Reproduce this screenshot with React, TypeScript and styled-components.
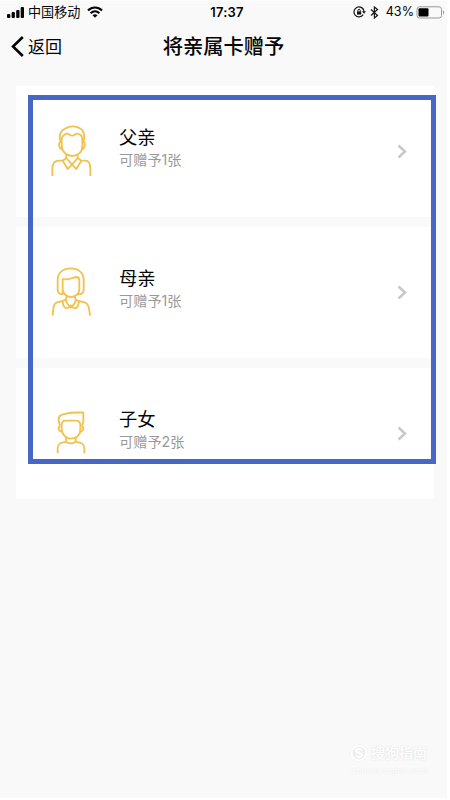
import React from "react";
import styled, { createGlobalStyle } from "styled-components";

const GlobalStyle = createGlobalStyle`
  * { box-sizing: border-box; }
  body {
    margin: 0;
    background: #fff;
    font-family: "Liberation Sans", "Noto Sans CJK SC", sans-serif;
  }
`;

const Screen = styled.div`
  position: relative;
  width: 447px;
  height: 798px;
  background: #f9f9f9;
  color: #050505;
  border-top: 1px solid #fefefe;
  overflow: hidden;
`;

const StatusBar = styled.div`
  display: grid;
  grid-template-columns: 1fr auto 1fr;
  align-items: center;
  height: 21px;
  padding: 0 2px 0 7px;
`;

const StatusGroup = styled.div<{ $end?: boolean }>`
  display: flex;
  align-items: center;
  justify-content: ${(p) => (p.$end ? "flex-end" : "flex-start")};
`;

const Carrier = styled.span`
  margin: 2px 7px 0 4px;
  font-size: 13.1px;
  line-height: 20px;
`;

const Clock = styled.span`
  margin-left: 2px;
  font-family: Inter, sans-serif;
  font-size: 13px;
  font-weight: 600;
  letter-spacing: 0.25px;
  line-height: 20px;
`;

const Bluetooth = styled.svg`
  margin-left: 4px;
`;

const Percent = styled.span`
  margin: 0 2px 0 7px;
  font-family: Inter, sans-serif;
  font-size: 12.6px;
  line-height: 20px;
`;

const NavBar = styled.header`
  display: grid;
  grid-template-columns: 1fr auto 1fr;
  align-items: center;
  height: 64px;
  padding: 0 11px 14px;
`;

const BackButton = styled.div`
  display: flex;
  align-items: center;
  gap: 4px;
  font-size: 17px;
  line-height: 24px;
`;

const BackLabel = styled.span`
  padding-top: 2px;
`;

const Title = styled.h1`
  margin: 0 0 1px;
  font-size: 20.3px;
  font-weight: 500;
  line-height: 28px;
`;

const CardList = styled.main`
  display: flex;
  flex-direction: column;
  gap: 10px;
  padding: 0 13px 0 16px;
`;

const Card = styled.section`
  display: flex;
  align-items: flex-start;
  height: 131px;
  padding: 36px 27px 0 33px;
  background: #fff;
`;

const CardText = styled.div`
  flex: 1;
  margin-left: 25px;
`;

const Relation = styled.div`
  padding-top: 4px;
  font-size: 18.3px;
  line-height: 24px;
`;

const Quota = styled.div`
  color: #999;
  font-family: Inter, "Noto Sans CJK SC", sans-serif;
  font-size: 14.2px;
  line-height: 20px;
`;

const Chevron = styled.svg`
  margin-top: 22px;
`;

const Highlight = styled.div`
  position: absolute;
  left: 28px;
  top: 94px;
  width: 408px;
  height: 369px;
  border: 5px solid #4667c4;
`;

const Watermark = styled.div`
  position: absolute;
  left: 350px;
  top: 742px;
  color: #fff;
  text-shadow: 0 0 2px #d8d8d8;
`;

const WatermarkBrand = styled.div`
  display: flex;
  align-items: center;
  gap: 3px;
  font-size: 14px;
  font-weight: 500;
  line-height: 20px;
`;

const WatermarkSite = styled.div`
  padding-left: 2px;
  font-size: 8px;
  line-height: 15px;
  letter-spacing: 0.7px;
`;

type Person = "father" | "mother" | "child";

function FatherDrawing() {
  return (
    <>
      <path d="M63 69L60 52C60 36 68 31 78 25C90 17 112 17 124 27C134 34 134 48 134 55L131 69" />
      <path d="M62 66C56 68 57 86 67 88M132 66C138 68 136 86 127 88" />
      <path d="M66 74V58C66 51 72 45 80 41C87 39 89 47 97 47C106 48 107 39 114 41C123 43 128 50 128 59V78C128 97 114 108 97 108S66 95 66 74Z" />
      <path d="M80 104V114L97 134L114 114V104" />
      <path d="M80 114L69 122L84 147L97 134L110 147L125 122L114 114" />
      <path d="M71 122H58C44 122 38 132 38 146V168M123 122H136C147 122 152 133 152 146V168" />
    </>
  );
}

function MotherDrawing() {
  return (
    <>
      <path d="M70 118C59 118 53 113 53 104V74C53 53 70 40 92 40S131 53 131 74V104C131 113 126 118 114 118" />
      <path d="M68 117V72C84 77 98 67 110 66C116 66 118 69 118 77V102C118 116 107 126 93 126C81 126 70 117 68 105" />
      <path d="M80 122L78 134C78 143 84 149 92 158C101 150 107 143 107 134L104 122" />
      <path d="M78 134L68 138C68 148 72 157 79 160C85 160 88 156 92 151C97 156 101 160 106 160C112 157 117 148 116 138L107 134" />
      <path d="M68 138L51 142C42 145 40 152 38 182M116 138L134 142C144 145 147 154 150 182" />
    </>
  );
}

function ChildDrawing() {
  return (
    <>
      <path d="M60 78L56 61C54 46 66 43 82 40C98 37 114 38 130 37V65L126 79" />
      <path d="M65 84V75C65 65 70 62 78 62H108C117 62 121 66 121 76V90C121 106 108 116 93 116S65 104 65 84Z" />
      <path d="M61 79C53 81 54 94 66 95M125 79C133 81 131 94 120 95" />
      <path d="M78 110V121C80 133 105 133 107 121V110M77 126C58 127 53 133 53 146V160M108 126C127 127 133 133 133 146V160" />
    </>
  );
}

const drawings: Record<Person, { Drawing: () => React.JSX.Element; viewBox: string }> = {
  father: { Drawing: FatherDrawing, viewBox: "28 6 135 168" },
  mother: { Drawing: MotherDrawing, viewBox: "27 24 135 168" },
  child: { Drawing: ChildDrawing, viewBox: "27 12 135 168" },
};

function PersonIcon({ person }: { person: Person }) {
  const { Drawing, viewBox } = drawings[person];
  return (
    <svg
      width="45"
      height="56"
      viewBox={viewBox}
      fill="none"
      stroke="#f1c24d"
      strokeWidth="5.500"
      strokeLinejoin="round"
    >
      <Drawing />
    </svg>
  );
}

const relatives: { person: Person; name: string; quota: string }[] = [
  { person: "father", name: "父亲", quota: "可赠予1张" },
  { person: "mother", name: "母亲", quota: "可赠予1张" },
  { person: "child", name: "子女", quota: "可赠予2张" },
];

export default function App() {
  return (
    <>
      <GlobalStyle />
      <Screen>
        <StatusBar>
          <StatusGroup>
            <svg width="17" height="11" viewBox="0 0 17 11" fill="#050505">
              <rect x="0" y="7" width="3.300" height="4" rx="1" />
              <rect x="4.600" y="5" width="3.300" height="6" rx="1" />
              <rect x="9.200" y="3" width="3.300" height="8" rx="1" />
              <rect x="13.700" y="0" width="3.300" height="11" rx="1" />
            </svg>
            <Carrier>中国移动</Carrier>
            <svg width="16" height="12" viewBox="0 0 16 12" fill="none" stroke="#050505" strokeWidth="2">
              <path d="M1 4.500c4-4 10-4 14 0M3.600 7.300c2.600-2.600 6.200-2.600 8.800 0" />
              <path d="M5.500 9.300c1.500-1.300 3.500-1.300 5 0L8 11.800z" fill="#050505" stroke="none" />
            </svg>
          </StatusGroup>
          <Clock>17:37</Clock>
          <StatusGroup $end>
            <svg width="13" height="12" viewBox="0 0 13 12" fill="none" stroke="#151515" strokeWidth="1.200">
              <path d="M10.200 8.600A5 5 0 1 1 11 5.500" />
              <path d="M9 5.300h4l-2 2.500z" fill="#151515" stroke="none" />
              <rect x="4" y="5.300" width="4.200" height="3.300" fill="#151515" stroke="none" />
              <path d="M4.900 5.300V4.500a1.200 1.200 0 0 1 2.400 0v.8" strokeWidth="1" />
            </svg>
            <Bluetooth width="9" height="13" viewBox="0 0 9 13" fill="none" stroke="#151515" strokeWidth="1.200">
              <path d="M1 3.500l6.500 6L4.400 12V1l3.100 2.500-6.500 6" />
            </Bluetooth>
            <Percent>43%</Percent>
            <svg width="29" height="13" viewBox="0 0 29 13" fill="none">
              <rect x="1" y=".8" width="24.500" height="11.200" rx="2.500" stroke="#999" />
              <rect x="2.500" y="2.300" width="10" height="8.200" rx="1" fill="#000" />
              <path d="M27 4.300c1.600.7 1.600 3.500 0 4.200z" fill="#999" />
            </svg>
          </StatusGroup>
        </StatusBar>
        <NavBar>
          <BackButton>
            <svg width="13" height="22" viewBox="0 0 13 22" fill="none" stroke="#050505" strokeWidth="2.600">
              <path d="M11.800 1L2 10.500l9.800 9.500" />
            </svg>
            <BackLabel>返回</BackLabel>
          </BackButton>
          <Title>将亲属卡赠予</Title>
        </NavBar>
        <CardList>
          {relatives.map((r) => (
            <Card key={r.person}>
              <PersonIcon person={r.person} />
              <CardText>
                <Relation>{r.name}</Relation>
                <Quota>{r.quota}</Quota>
              </CardText>
              <Chevron width="10" height="15" viewBox="0 0 10 15" fill="none" stroke="#c7c7cc" strokeWidth="2.400">
                <path d="M1.500 1.500L8 7.500l-6.500 6" />
              </Chevron>
            </Card>
          ))}
        </CardList>
        <Highlight />
        <Watermark>
          <WatermarkBrand>
            <svg width="18" height="18" viewBox="0 0 18 18" fill="none" stroke="#fff" strokeWidth="2">
              <circle cx="9" cy="9" r="7" fill="#efefef" stroke="#e9e9e9" strokeWidth="3" />
              <circle cx="9" cy="9" r="7.300" />
              <path d="M12 6C9 4 6 5 6 7s6 1.500 6 4-4 2.500-6 1" />
            </svg>
            搜狗指南
          </WatermarkBrand>
          <WatermarkSite>zhinan.sogou.com</WatermarkSite>
        </Watermark>
      </Screen>
    </>
  );
}
